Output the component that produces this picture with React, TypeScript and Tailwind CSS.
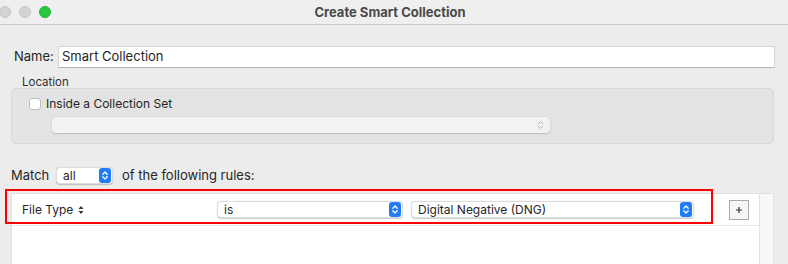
import React from "react";

function BlueStepper() {
  return (
    <div className="w-[12px] h-[15px] rounded-[3px] bg-[#1f7cf6] flex items-center justify-center">
      <svg width="8" height="11" viewBox="0 0 8 11" fill="none">
        <path d="M1.8 4.2 L4 2 L6.2 4.2" stroke="white" strokeWidth="1.3" strokeLinecap="round" strokeLinejoin="round" />
        <path d="M1.8 6.8 L4 9 L6.2 6.8" stroke="white" strokeWidth="1.3" strokeLinecap="round" strokeLinejoin="round" />
      </svg>
    </div>
  );
}

function Popup({ label, className }: { label: string; className: string }) {
  return (
    <div
      className={
        "h-[17px] bg-white rounded-[4px] border border-[#dcdcdc] shadow-[0_0.5px_1px_rgba(0,0,0,0.2)] flex items-center pl-[6px] pr-[1px] " +
        className
      }
    >
      <span className="flex-1 text-[12px] leading-none text-[#262626]">{label}</span>
      <BlueStepper />
    </div>
  );
}

export default function App() {
  return (
    <div className="w-[788px] h-[264px] bg-[#ececec] overflow-hidden relative font-['Inter',sans-serif] text-[#262626]">
      {/* Title bar */}
      <div className="h-[25px] bg-[#efefef] border-b border-[#c9c9c9] grid grid-cols-[1fr_auto_1fr] items-center">
        <div className="flex items-center gap-[8px] ml-[-1px]">
          <div className="w-[12px] h-[12px] rounded-full bg-[#d3d3d3] border border-[#c5c5c5]" />
          <div className="w-[12px] h-[12px] rounded-full bg-[#d3d3d3] border border-[#c5c5c5]" />
          <div className="w-[12px] h-[12px] rounded-full bg-[#28c840] border border-[#20b435]" />
        </div>
        <div className="text-[13px] font-bold text-[#4a4a4a] leading-none pr-[8px]">Create Smart Collection</div>
        <div />
      </div>

      <div className="pl-[11px] pr-[14px]">
        {/* Name row */}
        <div className="flex items-center mt-[21px] pr-0">
          <span className="pl-[3px] w-[47px] text-[13px]">Name:</span>
          <div className="flex-1 mr-[-1px] h-[22px] bg-white border border-[#d6d6d6] border-b-[#b4b4b4] flex items-center pl-[3px] text-[13px]">
            Smart Collection
          </div>
        </div>

        {/* Location */}
        <div className="pl-[11px] mt-[7px] h-[13px] text-[11.5px] leading-[14px] text-[#303030]">Location</div>
        <div className="h-[56px] bg-[#e3e3e3] border border-[#d8d8d8] rounded-[5px] pt-[9px] pl-[17px]">
          <div className="flex items-center gap-[5px]">
            <div className="w-[12px] h-[12px] bg-white border border-[#bdbdbd] rounded-[3px]" />
            <span className="text-[12px] leading-[12px]">Inside a Collection Set</span>
          </div>
          <div className="ml-[23px] mt-[7px] w-[498px] h-[16px] bg-[#f2f2f2] rounded-[4px] shadow-[0_0.5px_1.5px_rgba(0,0,0,0.18)] flex items-center justify-end pr-[6px]">
            <svg width="7" height="10" viewBox="0 0 7 10" fill="none">
              <path d="M1.2 3.6 L3.5 1.4 L5.8 3.6" stroke="#b0b0b0" strokeWidth="1" strokeLinecap="round" strokeLinejoin="round" />
              <path d="M1.2 6.4 L3.5 8.6 L5.8 6.4" stroke="#b0b0b0" strokeWidth="1" strokeLinecap="round" strokeLinejoin="round" />
            </svg>
          </div>
        </div>

        {/* Match row */}
        <div className="flex items-center mt-[23px] h-[17px]">
          <span className="text-[13px] w-[45px]">Match</span>
          <Popup label="all" className="w-[57px]" />
          <span className="text-[13px] ml-[9px]">of the following rules:</span>
        </div>

        {/* Rules table */}
        <div className="mt-[9px] flex h-[100px]">
          <div className="flex-1 bg-white border-l border-t border-[#e0e0e0]">
            <div className="h-[32px] border-b border-[#e6e6e6] flex items-center">
              <div className="pl-[10px] w-[205px] flex items-center gap-[5px] text-[12px]">
                <span>File Type</span>
                <svg width="6" height="10" viewBox="0 0 6 10">
                  <path d="M0.5 4 L3 1 L5.5 4 Z" fill="#333" />
                  <path d="M0.5 6 L3 9 L5.5 6 Z" fill="#333" />
                </svg>
              </div>
              <Popup label="is" className="w-[186px]" />
              <Popup label="Digital Negative (DNG)" className="w-[283px] ml-[8px]" />
              <div className="ml-[35px] w-[20px] h-[20px] bg-[#f6f6f6] border border-[#a9a9a9] flex items-center justify-center">
                <svg width="8" height="8" viewBox="0 0 8 8">
                  <path d="M4 1 V7 M1 4 H7" stroke="#333" strokeWidth="1.2" />
                </svg>
              </div>
            </div>
          </div>
          <div className="w-[15px] bg-[#f8f8f8] border-l border-t border-r border-[#e2e2e2]" />
        </div>
      </div>

      {/* red annotation overlay */}
      <div className="absolute left-[5px] top-[189px] w-[708px] h-[35px] border-2 border-[#ff0000] pointer-events-none" />
    </div>
  );
}
